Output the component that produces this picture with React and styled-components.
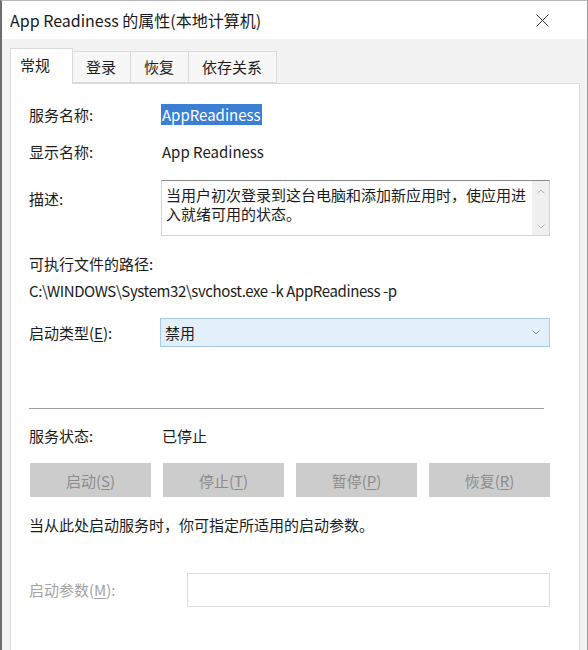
import React from "react";
import styled, { createGlobalStyle } from "styled-components";

const GlobalStyle = createGlobalStyle`
  html, body {
    margin: 0;
    padding: 0;
    background: #f0f0f0;
  }
  body {
    font-family: "Noto Sans CJK SC", "Noto Sans", sans-serif;
    color: #1b1b1b;
  }
`;

const Window = styled.div`
  width: 588px;
  height: 650px;
  box-sizing: border-box;
  border-left: 2px solid #6d6d6d;
  border-right: 1px solid #9a9a9a;
  border-top: 1px solid #b8b8b8;
  background: #f2f2f2;
  overflow: hidden;
  display: flex;
  flex-direction: column;
`;

const TitleBar = styled.div`
  height: 38px;
  flex: none;
  background: #fff;
  display: flex;
  align-items: center;
  justify-content: space-between;
  padding: 0 38px 0 8px;
  font-size: 16px;
  color: #1a1a1a;
`;

const CloseIcon = () => (
  <svg width="13" height="13" viewBox="0 0 13 13">
    <path d="M0.5 0.5 L12.5 12.5 M12.5 0.5 L0.5 12.5" stroke="#333" strokeWidth="1" />
  </svg>
);

const Body = styled.div`
  flex: 1;
  padding: 9px 7px 0 8px;
  display: flex;
  flex-direction: column;
`;

const TabStrip = styled.div`
  display: flex;
  align-items: flex-end;
  height: 35px;
  flex: none;
  position: relative;
  z-index: 1;
`;

const Tab = styled.div`
  box-sizing: border-box;
  padding: ${(p) => (p.$active ? "0 22px 4px 9px" : "0 14px 1px 13px")};
  height: ${(p) => (p.$active ? 36 : 32)}px;
  margin-bottom: ${(p) => (p.$active ? -1 : 0)}px;
  display: flex;
  align-items: center;
  font-size: 15px;
  background: ${(p) => (p.$active ? "#fff" : "#f7f7f7")};
  border: 1px solid #dadada;
  border-bottom: ${(p) => (p.$active ? "none" : "1px solid #dadada")};
  margin-left: ${(p) => (p.$first ? 0 : -1)}px;
`;

const Panel = styled.div`
  flex: 1;
  background: #fff;
  border: 1px solid #dadada;
  border-bottom: none;
  padding: 21px 29px 0 18px;
  display: flex;
  flex-direction: column;
`;

const Row = styled.div`
  display: grid;
  grid-template-columns: 133px 1fr;
  align-items: ${(p) => p.$align || "center"};
  margin-top: ${(p) => p.$gap || 0}px;
  font-size: 15px;
  line-height: 20px;
`;

const Label = styled.div`
  color: ${(p) => (p.$disabled ? "#a3a3a3" : "#1b1b1b")};
  margin-top: ${(p) => p.$top || 0}px;
  white-space: nowrap;
`;

const Selected = styled.span`
  background: #3b7fd4;
  color: #fff;
  padding: 0 1px;
  margin-left: -1px;
`;

const Line = styled.div`
  font-size: 15px;
  line-height: 20px;
  margin-top: ${(p) => p.$gap || 0}px;
  letter-spacing: ${(p) => p.$tight ? "-0.4px" : "normal"};
  white-space: nowrap;
`;

const TextArea = styled.div`
  height: 56px;
  box-sizing: border-box;
  border: 1px solid #d4d4d4;
  border-top-color: #8a8a8a;
  display: flex;
  margin-left: -1px;
`;

const AreaText = styled.div`
  flex: 1;
  padding: 4px 0 0 4px;
  line-height: 19px;
  font-size: 15px;
`;

const ScrollBar = styled.div`
  width: 17px;
  background: #f0f0f0;
  display: flex;
  flex-direction: column;
  justify-content: space-between;
  align-items: center;
  padding: 8px 0 6px;
`;

const Chevron = ({ up, color = "#b5b5b5" }) => (
  <svg width="8" height="5" viewBox="0 0 8 5">
    <path
      d={up ? "M0.5 4.5 L4 1 L7.5 4.5" : "M0.5 0.5 L4 4 L7.5 0.5"}
      fill="none"
      stroke={color}
      strokeWidth="1"
    />
  </svg>
);

const Combo = styled.div`
  height: 29px;
  box-sizing: border-box;
  margin-left: -2px;
  background: #e3f0fb;
  border: 1px solid #a9cbe9;
  display: flex;
  align-items: center;
  justify-content: space-between;
  padding: 0 9px 0 4px;
`;

const Key = styled.span`
  text-decoration: underline;
  text-underline-offset: 2px;
`;

const Separator = styled.div`
  height: 1px;
  background: #a0a0a0;
  margin: 61px 6px 0 0;
`;

const ButtonRow = styled.div`
  display: flex;
  justify-content: space-between;
  margin-top: 17px;
  padding-left: 1px;
`;

const Button = styled.div`
  width: 121px;
  height: 34px;
  background: #cccccc;
  color: #8c8c8c;
  font-size: 15px;
  display: flex;
  align-items: center;
  justify-content: center;
`;

const Input = styled.div`
  height: 34px;
  box-sizing: border-box;
  border: 1px solid #dcdcdc;
  background: #fff;
  margin-left: 25px;
`;

export default function App() {
  const buttons = [
    ["启动", "S"],
    ["停止", "T"],
    ["暂停", "P"],
    ["恢复", "R"],
  ];
  return (
    <>
      <GlobalStyle />
      <Window>
        <TitleBar>
          <span>App Readiness 的属性(本地计算机)</span>
          <CloseIcon />
        </TitleBar>
        <Body>
          <TabStrip>
            <Tab $active $first>常规</Tab>
            <Tab>登录</Tab>
            <Tab>恢复</Tab>
            <Tab>依存关系</Tab>
          </TabStrip>
          <Panel>
            <Row>
              <Label>服务名称:</Label>
              <div>
                <Selected>AppReadiness</Selected>
              </div>
            </Row>
            <Row $gap={17}>
              <Label>显示名称:</Label>
              <div>App Readiness</div>
            </Row>
            <Row $gap={18} $align="start">
              <Label $top={9}>描述:</Label>
              <TextArea>
                <AreaText>当用户初次登录到这台电脑和添加新应用时，使应用进入就绪可用的状态。</AreaText>
                <ScrollBar>
                  <Chevron up />
                  <Chevron />
                </ScrollBar>
              </TextArea>
            </Row>
            <Line $gap={18}>可执行文件的路径:</Line>
            <Line $gap={7} $tight>C:\WINDOWS\System32\svchost.exe -k AppReadiness -p</Line>
            <Row $gap={17}>
              <Label>
                启动类型(<Key>E</Key>):
              </Label>
              <Combo>
                <span>禁用</span>
                <Chevron color="#8f8f8f" />
              </Combo>
            </Row>
            <Separator />
            <Row $gap={17}>
              <Label>服务状态:</Label>
              <div>已停止</div>
            </Row>
            <ButtonRow>
              {buttons.map(([text, key]) => (
                <Button key={key}>
                  {text}(<Key>{key}</Key>)
                </Button>
              ))}
            </ButtonRow>
            <Line $gap={18}>当从此处启动服务时，你可指定所适用的启动参数。</Line>
            <Row $gap={38}>
              <Label $disabled>
                启动参数(<Key>M</Key>):
              </Label>
              <Input />
            </Row>
          </Panel>
        </Body>
      </Window>
    </>
  );
}
